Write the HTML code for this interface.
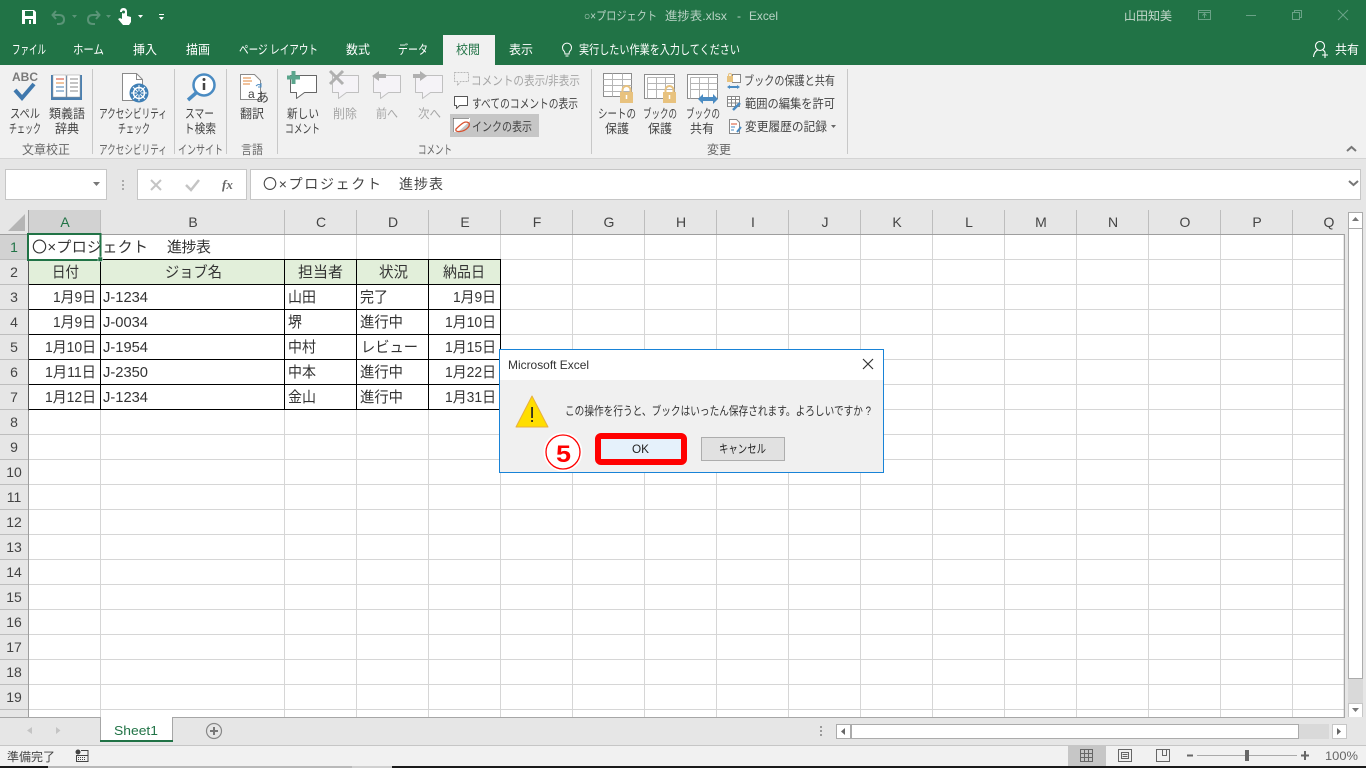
<!DOCTYPE html>
<html lang="ja"><head><meta charset="utf-8"><title>Excel</title>
<style>
html,body{margin:0;padding:0;width:1366px;height:768px;overflow:hidden;background:#fff}
svg{display:block;font-family:"Liberation Sans","Noto Sans CJK JP",sans-serif}
.r{font-size:12.5px;fill:#444}
.d{font-size:12.5px;fill:#a6a6a6}
.g{font-size:12.5px;fill:#666}
.t{font-size:12.5px;fill:#fff}
.c{font-size:15px;fill:#333}
.h{font-size:14px;fill:#444;text-anchor:middle}
</style></head><body>
<svg width="1366" height="768" viewBox="0 0 1366 768" xmlns="http://www.w3.org/2000/svg">
<rect width="1366" height="768" fill="#fff"/>
<!-- title bar -->
<rect width="1366" height="65" fill="#217346"/>
<rect x="443" y="35" width="52" height="30" fill="#f1f1f1"/>
<path d="M22 10h12l2 2v12H22z" fill="#fff"/><rect x="25" y="11" width="8" height="5" fill="#217346"/><rect x="25" y="19" width="8" height="5" fill="#217346"/><rect x="29" y="20" width="2" height="4" fill="#fff"/>
<g fill="none" stroke="#5a9477" stroke-width="2"><path d="M56 11l-3.500 4 3.500 4M53 15h6q5 0 5 4.500t-5 4.500h-2"/><path d="M96 11l3.500 4-3.500 4M99 15h-6q-5 0-5 4.500t5 4.500h2"/></g>
<path d="M72 15h5l-2.500 3zM106 15h5l-2.500 3z" fill="#5a9477"/>
<path d="M120 12q0-4 3.500-4t3.500 4v4l4 1v5l-2 3h-6l-5-6 2-1 2 1v-7z" fill="#fff"/><circle cx="123.500" cy="12" r="1.500" fill="#217346"/>
<path d="M138 15h5l-2.500 3zM159 14h5v1h-5zM159 17h5l-2.500 3z" fill="#fff"/>
<g font-size="12" fill="#b9d3c5">
<text x="584" y="20" textLength="73" lengthAdjust="spacingAndGlyphs">○×プロジェクト</text>
<text x="665" y="20" textLength="62" lengthAdjust="spacingAndGlyphs">進捗表.xlsx</text>
<text x="737" y="20">-</text>
<text x="749" y="20" textLength="29" lengthAdjust="spacingAndGlyphs">Excel</text>
</g>
<text x="1124" y="20" textLength="48" lengthAdjust="spacingAndGlyphs" font-size="12" fill="#c6dacd">山田知美</text>
<g fill="none" stroke="#6aa287"><rect x="1198.500" y="10.500" width="12" height="9"/><path d="M1198.500 12.500h12M1204.500 18v-4M1202.500 15.500l2-2 2 2"/><path d="M1246 15.500h10"/><rect x="1292.500" y="12.500" width="7" height="7"/><path d="M1294.500 12.500v-2h7v7h-2"/><path d="M1338 10l10 10M1348 10l-10 10"/></g>
<text class="t" x="12" y="54" textLength="34" lengthAdjust="spacingAndGlyphs">ファイル</text>
<text class="t" x="73" y="54" textLength="31" lengthAdjust="spacingAndGlyphs">ホーム</text>
<text class="t" x="133" y="54" textLength="24" lengthAdjust="spacingAndGlyphs">挿入</text>
<text class="t" x="186" y="54" textLength="24" lengthAdjust="spacingAndGlyphs">描画</text>
<text class="t" x="239" y="54" textLength="79" lengthAdjust="spacingAndGlyphs">ページ レイアウト</text>
<text class="t" x="346" y="54" textLength="24" lengthAdjust="spacingAndGlyphs">数式</text>
<text class="t" x="398" y="54" textLength="30" lengthAdjust="spacingAndGlyphs">データ</text>
<text x="456" y="54" textLength="24" lengthAdjust="spacingAndGlyphs" font-size="12.5" fill="#217346">校閲</text>
<text class="t" x="509" y="54" textLength="24" lengthAdjust="spacingAndGlyphs">表示</text>
<text class="t" x="579" y="54" textLength="161" lengthAdjust="spacingAndGlyphs">実行したい作業を入力してください</text>
<text class="t" x="1335" y="54" textLength="24" lengthAdjust="spacingAndGlyphs">共有</text>
<path d="M564 51a4.500 4.500 0 1 1 6 0q-1 1-1 3h-4q0-2-1-3zM565.500 56h3" fill="none" stroke="#fff"/>
<circle cx="1320" cy="46" r="4.500" fill="none" stroke="#fff" stroke-width="1.100"/><path d="M1313.500 57q.5-5 4-7M1323 50q1.500 1 2 2M1325 52v6M1322 55h6" fill="none" stroke="#fff" stroke-width="1.100"/>

<!-- ribbon -->
<rect y="65" width="1366" height="93" fill="#f1f1f1"/>
<rect x="443" y="60" width="52" height="6" fill="#f1f1f1"/>
<g fill="#c8c8c8"><rect x="92" y="69" width="1" height="85"/><rect x="174" y="69" width="1" height="85"/><rect x="226" y="69" width="1" height="85"/><rect x="277" y="69" width="1" height="85"/><rect x="591" y="69" width="1" height="85"/><rect x="847" y="69" width="1" height="85"/></g>
<rect x="450" y="114" width="89" height="23" fill="#c6c6c6"/>

<!-- ribbon icons -->
<text x="12" y="81" textLength="26" lengthAdjust="spacingAndGlyphs" font-size="12" font-weight="bold" fill="#7a7a7a">ABC</text>
<path d="M15 90l7 8 12-14" fill="none" stroke="#3f78ad" stroke-width="4"/>
<path d="M51 75h14l2 1 2-1h13v25H51z" fill="#4a7fb0"/><rect x="53" y="75" width="13" height="22" fill="#fff" stroke="#999" stroke-width=".5"/><rect x="67" y="75" width="13" height="22" fill="#fff" stroke="#999" stroke-width=".5"/>
<path d="M56 79h8" stroke="#d6462e"/><path d="M56 83h8" stroke="#e08a3c"/><path d="M56 87h8M56 91h8" stroke="#4a7fb0"/><path d="M70 79h8M70 83h8M70 87h8M70 91h8" stroke="#8a8a8a"/>
<path d="M122.500 73.500h14l6 6v21h-20z" fill="#fff" stroke="#8a8a8a"/><path d="M136.500 73.500v6h6" fill="none" stroke="#8a8a8a"/>
<circle cx="139" cy="93" r="9.500" fill="#3f7fb5"/><circle cx="139" cy="93" r="5.500" fill="none" stroke="#fff" stroke-width="1.500"/><path d="M139 85v16M131 93h16M133 87l12 12M145 87l-12 12" stroke="#fff"/><circle cx="139" cy="93" r="1.800" fill="#3f7fb5"/>
<circle cx="204" cy="85" r="10.500" fill="#fff" stroke="#4a8bc2" stroke-width="2.500"/><path d="M196 93l-8 7" stroke="#4a8bc2" stroke-width="3.500"/><path d="M204 83v7" stroke="#444" stroke-width="2.500"/><circle cx="204" cy="79.500" r="1.500" fill="#444"/>
<path d="M240.500 74.500h14l6 6v19h-20z" fill="#fff" stroke="#8a8a8a"/>
<path d="M243 78h8M243 81h9M243 84h7" stroke="#e0853a"/>
<path d="M256 86q3-3 5 0M261 83v4h-3" fill="none" stroke="#4a8bc2"/>
<text x="248" y="98" font-size="12" fill="#444">a</text><text x="256" y="102" font-size="13" fill="#444">あ</text>
<!-- comments -->
<path d="M290.500 75.500h26v17h-12l-8 6v-6h-6z" fill="#fff" stroke="#666" stroke-linejoin="round"/>
<path d="M291.500 71h4v4.500h4.500v4h-4.500v4.500h-4v-4.500h-4.500v-4h4.500z" fill="#5aa58c"/>
<g fill="#f5f3f7" stroke="#c0c0c0" stroke-linejoin="round"><path d="M332.500 75.500h26v17h-12l-8 6v-6h-6z"/><path d="M373.500 75.500h27v17h-12l-8 6v-6h-7z"/><path d="M415.500 75.500h27v17h-12l-8 6v-6h-7z"/></g>
<path d="M330 71l13 13M343 71l-13 13" stroke="#b0b0b0" stroke-width="3"/>
<path d="M372 76l7-5v3h7v4h-7v3z" fill="#b0b0b0"/><path d="M427 76l-7-5v3h-7v4h7v3z" fill="#b0b0b0"/>
<path d="M454.500 72.500h14v9h-8l-3 4v-4h-3z" fill="#f1f1f1" stroke="#b8b8b8" stroke-dasharray="2 1"/>
<path d="M454.500 96.500h13v9h-8l-3 3v-3h-2z" fill="#fff" stroke="#555" stroke-linejoin="round"/>
<path d="M453 118h17v3l-12 11h-5z" fill="#fff"/><path d="M453.500 118.500h16M453.500 118.500v13" stroke="#333" stroke-dasharray="1 1" fill="none"/>
<path d="M469 123q-3-2-6 0t-7 6q-1 3 4 2.500t8-4q2-2 1-4.500" fill="none" stroke="#d8502e" stroke-width="1.300"/>
<g fill="#fff" stroke="#8c8c8c"><rect x="603.500" y="73.500" width="28" height="23"/><rect x="644.500" y="74.500" width="30" height="24"/><rect x="687.500" y="74.500" width="30" height="24"/></g>
<path d="M603.500 79.500h28M603.500 85.500h28M603.500 91.500h28M612.500 73.500v23M622.500 73.500v23" fill="none" stroke="#b5b5b5"/>
<path d="M647.500 77.500h27M647.500 83.500h27M647.500 89.500h27M647.500 77.500v21M656.500 77.500v21M665.500 77.500v21" fill="none" stroke="#b5b5b5"/>
<path d="M690.500 77.500h27M690.500 83.500h27M690.500 89.500h27M690.500 77.500v21M699.500 77.500v21M708.500 77.500v21" fill="none" stroke="#b5b5b5"/>
<g fill="#e8c27e"><rect x="620" y="92" width="13" height="11"/><rect x="663" y="92" width="13" height="11"/></g>
<g fill="none" stroke="#e8c27e" stroke-width="2"><path d="M622.500 92v-2a4 4 0 0 1 8 0v2M665.500 92v-2a4 4 0 0 1 8 0v2"/></g>
<path d="M626.500 95v4M669.500 95v4" stroke="#fff" stroke-width="1.500"/>
<path d="M698 99l5-5v3h10v-3l5 5-5 5v-3h-10v3z" fill="#4a8bc2"/>
<!-- small change icons -->
<rect x="732.500" y="74.500" width="8" height="8" fill="#fff" stroke="#888"/><rect x="727" y="76" width="6" height="6" fill="#e8c27e"/><path d="M728.500 76v-1a1.500 1.500 0 0 1 3 0v1" fill="none" stroke="#e8c27e"/>
<path d="M730 85l-3 2 3 2v-1h7v1l3-2-3-2v1h-7z" fill="#4a8bc2"/>
<path d="M727.500 96.500h12v10h-12zM727.500 99.500h12M727.500 103h12M731.500 96.500v10M735.500 96.500v10" fill="#fff" stroke="#888"/>
<path d="M733 110l7-7" stroke="#4a8bc2" stroke-width="2.500"/>
<path d="M729.500 119.500h7l3 3v11h-10z" fill="#fff" stroke="#888"/><path d="M731 124h6" stroke="#d8502e"/><path d="M731 127h4M731 130h3" stroke="#4a8bc2"/><path d="M737 132l4-5" stroke="#4a8bc2" stroke-width="2"/>
<path d="M831 125h5l-2.500 3z" fill="#666"/>
<path d="M1347 151l4.500-4 4.500 4" fill="none" stroke="#777" stroke-width="2"/>

<!-- ribbon text -->
<text class="r" x="10" y="118" textLength="30" lengthAdjust="spacingAndGlyphs">スペル</text>
<text class="r" x="9" y="133" textLength="32" lengthAdjust="spacingAndGlyphs">チェック</text>
<text class="r" x="49" y="118" textLength="36" lengthAdjust="spacingAndGlyphs">類義語</text>
<text class="r" x="55" y="133" textLength="24" lengthAdjust="spacingAndGlyphs">辞典</text>
<text class="r" x="99" y="118" textLength="68" lengthAdjust="spacingAndGlyphs">アクセシビリティ</text>
<text class="r" x="118" y="133" textLength="32" lengthAdjust="spacingAndGlyphs">チェック</text>
<text class="r" x="185" y="118" textLength="29" lengthAdjust="spacingAndGlyphs">スマー</text>
<text class="r" x="184" y="133" textLength="32" lengthAdjust="spacingAndGlyphs">ト検索</text>
<text class="r" x="240" y="118" textLength="24" lengthAdjust="spacingAndGlyphs">翻訳</text>
<text class="r" x="287" y="118" textLength="32" lengthAdjust="spacingAndGlyphs">新しい</text>
<text class="r" x="285" y="133" textLength="35" lengthAdjust="spacingAndGlyphs">コメント</text>
<text class="d" x="333" y="118" textLength="24" lengthAdjust="spacingAndGlyphs">削除</text>
<text class="d" x="376" y="118" textLength="22" lengthAdjust="spacingAndGlyphs">前へ</text>
<text class="d" x="418" y="118" textLength="23" lengthAdjust="spacingAndGlyphs">次へ</text>
<text class="g" x="22" y="154" textLength="48" lengthAdjust="spacingAndGlyphs">文章校正</text>
<text class="g" x="99" y="154" textLength="68" lengthAdjust="spacingAndGlyphs">アクセシビリティ</text>
<text class="g" x="178" y="154" textLength="45" lengthAdjust="spacingAndGlyphs">インサイト</text>
<text class="g" x="241" y="154" textLength="22" lengthAdjust="spacingAndGlyphs">言語</text>
<text class="g" x="418" y="154" textLength="34" lengthAdjust="spacingAndGlyphs">コメント</text>
<text class="g" x="707" y="154" textLength="24" lengthAdjust="spacingAndGlyphs">変更</text>
<text class="d" x="471" y="85" textLength="109" lengthAdjust="spacingAndGlyphs">コメントの表示/非表示</text>
<text class="r" x="472" y="108" textLength="106" lengthAdjust="spacingAndGlyphs">すべてのコメントの表示</text>
<text class="r" x="472" y="131" textLength="60" lengthAdjust="spacingAndGlyphs">インクの表示</text>
<text class="r" x="598" y="118" textLength="38" lengthAdjust="spacingAndGlyphs">シートの</text>
<text class="r" x="605" y="133" textLength="24" lengthAdjust="spacingAndGlyphs">保護</text>
<text class="r" x="643" y="118" textLength="34" lengthAdjust="spacingAndGlyphs">ブックの</text>
<text class="r" x="648" y="133" textLength="24" lengthAdjust="spacingAndGlyphs">保護</text>
<text class="r" x="686" y="118" textLength="34" lengthAdjust="spacingAndGlyphs">ブックの</text>
<text class="r" x="690" y="133" textLength="24" lengthAdjust="spacingAndGlyphs">共有</text>
<text class="r" x="744" y="85" textLength="91" lengthAdjust="spacingAndGlyphs">ブックの保護と共有</text>
<text class="r" x="745" y="108" textLength="90" lengthAdjust="spacingAndGlyphs">範囲の編集を許可</text>
<text class="r" x="745" y="131" textLength="82" lengthAdjust="spacingAndGlyphs">変更履歴の記録</text>

<!-- formula bar -->
<rect y="158" width="1366" height="52" fill="#e6e6e6"/>
<rect y="158" width="1366" height="1" fill="#d4d4d4"/>
<g fill="#fff" stroke="#c6c6c6"><rect x="5.500" y="169.500" width="101" height="30"/><rect x="137.500" y="169.500" width="109" height="30"/><rect x="250.500" y="169.500" width="1110" height="30"/></g>
<path d="M93 182h7l-3.500 4z" fill="#777"/>
<path d="M122 180h2v2h-2zM122 184h2v2h-2zM122 188h2v2h-2z" fill="#aaa"/>
<path d="M151 180l10 10M161 180l-10 10" stroke="#c4c4c4" stroke-width="2"/>
<path d="M186 185l5 5 8-10" fill="none" stroke="#c4c4c4" stroke-width="2.500"/>
<text x="222" y="189" font-family="Liberation Serif" font-style="italic" font-weight="bold" font-size="13" fill="#666">fx</text>
<path d="M1349 181l4.500 4 4.500-4" fill="none" stroke="#777" stroke-width="2"/>
<text x="263" y="189" textLength="118" lengthAdjust="spacing" font-size="14" fill="#444">〇×プロジェクト</text>
<text x="399" y="189" textLength="44" lengthAdjust="spacing" font-size="14" fill="#444">進捗表</text>

<!-- headers -->
<rect y="210" width="1345" height="25" fill="#e6e6e6"/>
<rect y="235" width="28" height="482" fill="#e6e6e6"/>
<rect x="29" y="210" width="71" height="24" fill="#d2d2d2"/>
<rect y="235" width="28" height="24" fill="#d2d2d2"/>
<path d="M8 231l17-17v17z" fill="#b5b5b5"/>
<rect x="28" y="235" width="1317" height="482" fill="#fff"/>
<!-- grid -->
<path d="M100.500 235v482M284.500 235v482M356.500 235v482M428.500 235v482M500.500 235v482M572.500 235v482M644.500 235v482M716.500 235v482M788.500 235v482M860.500 235v482M932.500 235v482M1004.500 235v482M1076.500 235v482M1148.500 235v482M1220.500 235v482M1292.500 235v482M28 259.500h1316M28 284.500h1316M28 309.500h1316M28 334.500h1316M28 359.500h1316M28 384.500h1316M28 409.500h1316M28 434.500h1316M28 459.500h1316M28 484.500h1316M28 509.500h1316M28 534.500h1316M28 559.500h1316M28 584.500h1316M28 609.500h1316M28 634.500h1316M28 659.500h1316M28 684.500h1316M28 709.500h1316" stroke="#d6d6d6" fill="none"/>
<path d="M0 259.500h28M0 284.500h28M0 309.500h28M0 334.500h28M0 359.500h28M0 384.500h28M0 409.500h28M0 434.500h28M0 459.500h28M0 484.500h28M0 509.500h28M0 534.500h28M0 559.500h28M0 584.500h28M0 609.500h28M0 634.500h28M0 659.500h28M0 684.500h28M0 709.500h28M100.500 210v24M284.500 210v24M356.500 210v24M428.500 210v24M500.500 210v24M572.500 210v24M644.500 210v24M716.500 210v24M788.500 210v24M860.500 210v24M932.500 210v24M1004.500 210v24M1076.500 210v24M1148.500 210v24M1220.500 210v24M1292.500 210v24" stroke="#bdbdbd" fill="none"/>
<path d="M0 234.500h1345M28.500 210v507" stroke="#9e9e9e" fill="none"/>
<path d="M1344.500 234v484" stroke="#a6a6a6" stroke-width="1.500" fill="none"/>
<!-- table fills and borders -->
<rect x="29" y="260" width="472" height="24" fill="#e2efda"/>
<path d="M28.500 259.500h472M28.500 284.500h472M28.500 309.500h472M28.500 334.500h472M28.500 359.500h472M28.500 384.500h472M28.500 409.500h472M100.500 259v151M284.500 259v151M356.500 259v151M428.500 259v151M500.500 259v151" stroke="#000" fill="none"/>
<path d="M28.500 259.500v151" stroke="#555" fill="none"/>

<!-- column headers -->
<text class="h" x="65" y="227" style="fill:#217346">A</text>
<text class="h" x="193" y="227">B</text><text class="h" x="321" y="227">C</text><text class="h" x="393" y="227">D</text><text class="h" x="465" y="227">E</text><text class="h" x="537" y="227">F</text><text class="h" x="609" y="227">G</text><text class="h" x="681" y="227">H</text><text class="h" x="753" y="227">I</text><text class="h" x="825" y="227">J</text><text class="h" x="897" y="227">K</text><text class="h" x="969" y="227">L</text><text class="h" x="1041" y="227">M</text><text class="h" x="1113" y="227">N</text><text class="h" x="1185" y="227">O</text><text class="h" x="1257" y="227">P</text><text class="h" x="1329" y="227">Q</text>
<!-- row headers -->
<text class="h" x="14" y="252" style="fill:#217346">1</text>
<text class="h" x="14" y="277">2</text><text class="h" x="14" y="302">3</text><text class="h" x="14" y="327">4</text><text class="h" x="14" y="352">5</text><text class="h" x="14" y="377">6</text><text class="h" x="14" y="402">7</text><text class="h" x="14" y="427">8</text><text class="h" x="14" y="452">9</text><text class="h" x="14" y="477">10</text><text class="h" x="14" y="502">11</text><text class="h" x="14" y="527">12</text><text class="h" x="14" y="552">13</text><text class="h" x="14" y="577">14</text><text class="h" x="14" y="602">15</text><text class="h" x="14" y="627">16</text><text class="h" x="14" y="652">17</text><text class="h" x="14" y="677">18</text><text class="h" x="14" y="702">19</text><text class="h" x="14" y="727">20</text>

<!-- cells -->
<text class="c" x="32" y="252" textLength="116" lengthAdjust="spacing">〇×プロジェクト</text>
<text class="c" x="167" y="252" textLength="44" lengthAdjust="spacing">進捗表</text>
<text class="c" x="52" y="277" textLength="27" lengthAdjust="spacingAndGlyphs">日付</text>
<text class="c" x="165" y="277" textLength="57" lengthAdjust="spacingAndGlyphs">ジョブ名</text>
<text class="c" x="298" y="277" textLength="45" lengthAdjust="spacingAndGlyphs">担当者</text>
<text class="c" x="379" y="277" textLength="29" lengthAdjust="spacingAndGlyphs">状況</text>
<text class="c" x="443" y="277" textLength="42" lengthAdjust="spacingAndGlyphs">納品日</text>
<text class="c" x="53" y="302" textLength="43" lengthAdjust="spacingAndGlyphs">1月9日</text><text class="c" x="103" y="302" textLength="45" lengthAdjust="spacingAndGlyphs">J-1234</text><text class="c" x="288" y="302" textLength="28" lengthAdjust="spacingAndGlyphs">山田</text><text class="c" x="360" y="302" textLength="28" lengthAdjust="spacingAndGlyphs">完了</text><text class="c" x="453" y="302" textLength="43" lengthAdjust="spacingAndGlyphs">1月9日</text>
<text class="c" x="53" y="327" textLength="43" lengthAdjust="spacingAndGlyphs">1月9日</text><text class="c" x="103" y="327" textLength="45" lengthAdjust="spacingAndGlyphs">J-0034</text><text class="c" x="288" y="327" textLength="14" lengthAdjust="spacingAndGlyphs">堺</text><text class="c" x="360" y="327" textLength="43" lengthAdjust="spacingAndGlyphs">進行中</text><text class="c" x="445" y="327" textLength="51" lengthAdjust="spacingAndGlyphs">1月10日</text>
<text class="c" x="45" y="352" textLength="51" lengthAdjust="spacingAndGlyphs">1月10日</text><text class="c" x="103" y="352" textLength="45" lengthAdjust="spacingAndGlyphs">J-1954</text><text class="c" x="288" y="352" textLength="28" lengthAdjust="spacingAndGlyphs">中村</text><text class="c" x="361" y="352" textLength="57" lengthAdjust="spacingAndGlyphs">レビュー</text><text class="c" x="445" y="352" textLength="51" lengthAdjust="spacingAndGlyphs">1月15日</text>
<text class="c" x="45" y="377" textLength="51" lengthAdjust="spacingAndGlyphs">1月11日</text><text class="c" x="103" y="377" textLength="45" lengthAdjust="spacingAndGlyphs">J-2350</text><text class="c" x="288" y="377" textLength="28" lengthAdjust="spacingAndGlyphs">中本</text><text class="c" x="360" y="377" textLength="43" lengthAdjust="spacingAndGlyphs">進行中</text><text class="c" x="445" y="377" textLength="51" lengthAdjust="spacingAndGlyphs">1月22日</text>
<text class="c" x="45" y="402" textLength="51" lengthAdjust="spacingAndGlyphs">1月12日</text><text class="c" x="103" y="402" textLength="45" lengthAdjust="spacingAndGlyphs">J-1234</text><text class="c" x="288" y="402" textLength="28" lengthAdjust="spacingAndGlyphs">金山</text><text class="c" x="360" y="402" textLength="43" lengthAdjust="spacingAndGlyphs">進行中</text><text class="c" x="445" y="402" textLength="51" lengthAdjust="spacingAndGlyphs">1月31日</text>
<!-- selection -->
<rect x="28" y="234" width="72.500" height="26" fill="none" stroke="#217346" stroke-width="2"/>
<rect x="98" y="257" width="4.500" height="4.500" fill="#217346" stroke="#fff" stroke-width=".5"/>

<!-- vertical scrollbar -->
<rect x="1345" y="210" width="21" height="507" fill="#e6e6e6"/>
<rect x="1348" y="212" width="15" height="505" fill="#d9d9d9"/>
<rect x="1348.500" y="212.500" width="14" height="16" fill="#fff" stroke="#ababab"/>
<rect x="1348.500" y="228.500" width="14" height="450" fill="#fff" stroke="#ababab"/>
<rect x="1348.500" y="703.500" width="14" height="14" fill="#fff" stroke="#c6c6c6"/>
<path d="M1352 221l3.500-4 3.500 4zM1352 708h7l-3.500 4z" fill="#777"/>

<!-- tabs bar -->
<rect y="717" width="1366" height="28" fill="#e6e6e6"/>
<path d="M0 717.500h1345" stroke="#a6a6a6"/>
<path d="M32 727l-5 3.500 5 3.500zM56 727v7l4.500-3.500z" fill="#c4c4c4"/>
<rect x="100" y="717" width="73" height="23" fill="#fff"/><path d="M100.500 717v23M172.500 717v23" stroke="#a6a6a6"/>
<rect x="100" y="740" width="73" height="2" fill="#217346"/>
<text x="114" y="735" textLength="44" lengthAdjust="spacingAndGlyphs" font-size="13" fill="#217346">Sheet1</text>
<circle cx="214" cy="731" r="7.500" fill="none" stroke="#888" stroke-width="1.200"/><path d="M214 727v8M210 731h8" stroke="#777" stroke-width="2"/>
<path d="M820 726h2v2h-2zM820 730h2v2h-2zM820 734h2v2h-2z" fill="#999"/>
<rect x="836.500" y="724.500" width="14" height="14" fill="#fff" stroke="#ababab"/><path d="M845 728l-4 3.500 4 3.500z" fill="#666"/>
<rect x="851" y="724" width="478" height="15" fill="#d9d9d9"/>
<rect x="851.500" y="724.500" width="447" height="14" fill="#fff" stroke="#ababab"/>
<rect x="1332.500" y="724.500" width="14" height="14" fill="#fff" stroke="#c6c6c6"/><path d="M1337 728v7l4-3.500z" fill="#666"/>

<!-- status bar -->
<rect y="745" width="1366" height="23" fill="#f1f1f1"/>
<path d="M0 745.500h1366" stroke="#c6c6c6"/>
<rect x="1068" y="746" width="38" height="20" fill="#c6c6c6"/>
<text x="7" y="761" textLength="48" lengthAdjust="spacingAndGlyphs" font-size="12" fill="#444">準備完了</text>
<circle cx="78" cy="752" r="2.500" fill="#444"/><path d="M81 750.500h7v11H76.500v-6H88" fill="none" stroke="#444"/><path d="M78 757.500h8M78 759.500h8" stroke="#444" stroke-dasharray="1 1"/>
<path d="M1080.500 749.500h12v12h-12zM1084.500 749.500v12M1088.500 749.500v12M1080.500 753.500h12M1080.500 757.500h12" fill="none" stroke="#666"/>
<path d="M1118.500 749.500h13v12h-13z" fill="none" stroke="#666"/><path d="M1121.500 752.500h7v6h-7zM1122.500 754.500h5M1122.500 756.500h5" fill="none" stroke="#666"/>
<path d="M1156.500 749.500h13v12h-13zM1162.500 749.500v6h4v-6" fill="none" stroke="#666"/>
<path d="M1187 755.500h6" stroke="#666" stroke-width="2"/>
<path d="M1197 755.500h100" stroke="#aaa"/>
<rect x="1245" y="750" width="4" height="11" fill="#666"/>
<path d="M1301 755.500h8M1305 751v9" stroke="#666" stroke-width="2"/>
<text x="1325" y="760" textLength="33" lengthAdjust="spacingAndGlyphs" font-size="12" fill="#666">100%</text>
<rect y="766" width="48" height="2" fill="#1a1a1a"/>
<rect x="48" y="766" width="304" height="2" fill="#b9b9b9"/>
<rect x="352" y="766" width="40" height="2" fill="#d0d0d0"/>
<rect x="392" y="766" width="974" height="2" fill="#1a1a1a"/>

<!-- dialog -->
<rect x="499.500" y="349.500" width="384" height="123" fill="#f0f0f0" stroke="#1883d7"/>
<rect x="500" y="350" width="383" height="30" fill="#fff"/>
<text x="508" y="369" textLength="81" lengthAdjust="spacingAndGlyphs" font-size="12" fill="#333">Microsoft Excel</text>
<path d="M863 359l10 10M873 359l-10 10" stroke="#333" stroke-width="1.200"/>
<path d="M532 396l16 31h-32z" fill="#ffde00" stroke="#e8b040" stroke-linejoin="round"/>
<rect x="531.200" y="407" width="1.700" height="11" fill="#222"/><rect x="531.200" y="420" width="1.700" height="2" fill="#222"/>
<text x="565" y="415" textLength="306" lengthAdjust="spacingAndGlyphs" font-size="12" fill="#333">この操作を行うと、ブックはいったん保存されます。よろしいですか ?</text>
<rect x="598" y="436" width="86" height="26" rx="3" fill="#e5f1fb" stroke="#f00" stroke-width="6"/>
<text x="632" y="453" textLength="17" lengthAdjust="spacingAndGlyphs" font-size="12" fill="#222">OK</text>
<rect x="701.500" y="437.500" width="83" height="23" fill="#e1e1e1" stroke="#adadad"/>
<text x="719" y="453" textLength="47" lengthAdjust="spacingAndGlyphs" font-size="12" fill="#222">キャンセル</text>
<circle cx="563" cy="452" r="19.500" fill="#fff"/>
<circle cx="563" cy="452" r="17" fill="#fff" stroke="#f00" stroke-width="1.300"/>
<text x="556" y="462" textLength="15" lengthAdjust="spacingAndGlyphs" font-size="24" font-weight="bold" fill="#f00">5</text>
</svg>
</body></html>
